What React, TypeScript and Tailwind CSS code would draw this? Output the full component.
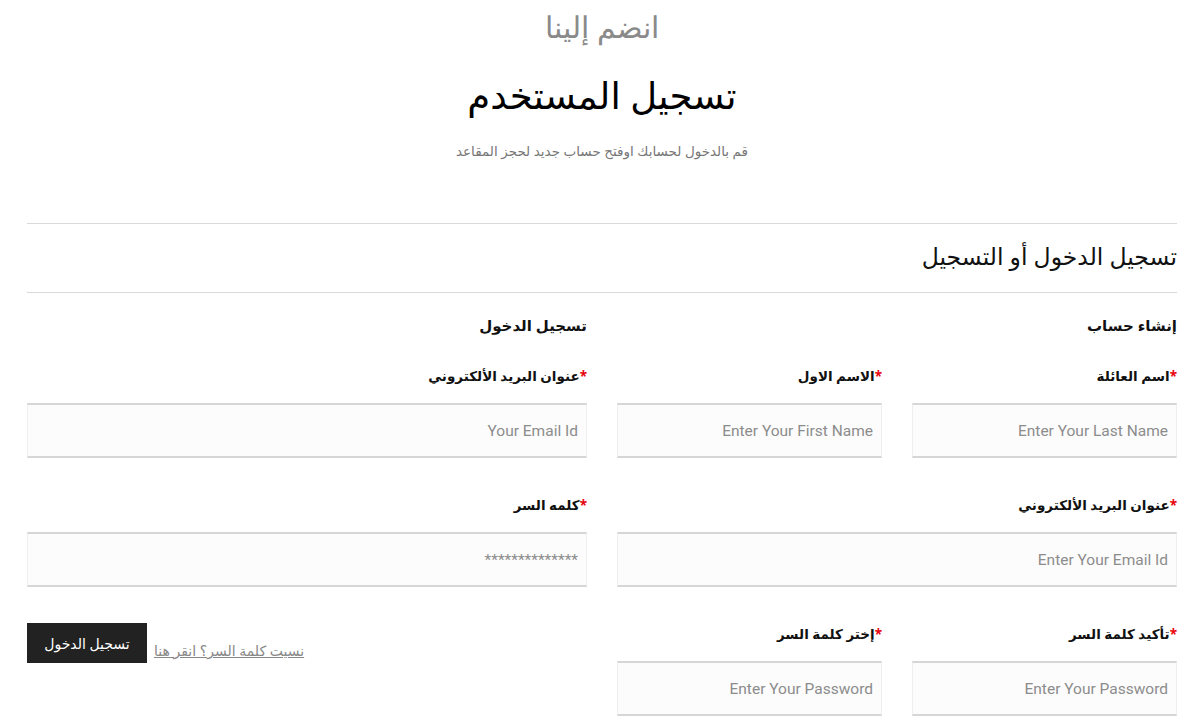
const font = { fontFamily: '"Noto Sans", "DejaVu Sans", sans-serif' };
const latin = { fontFamily: 'Roboto, "DejaVu Sans", sans-serif' };

type FieldProps = {
  label: string;
  placeholder: string;
  type?: string;
};

function Field({ label, placeholder, type = "text" }: FieldProps) {
  return (
    <div className="flex flex-col">
      <label className="h-[26px] text-[13.5px] font-bold leading-[26px] text-[#111]">
        <span className="text-red-600">*</span>
        {label}
      </label>
      <input
        type={type}
        placeholder={placeholder}
        style={latin}
        className="mt-[14px] h-[55px] w-full border-x border-x-[#eee] border-y-2 border-y-[#d6d6d6] bg-[#fcfcfc] px-2 text-[15.5px] text-[#333] outline-none placeholder:text-[#8c8c8c]"
      />
    </div>
  );
}

export default function App() {
  return (
    <div dir="rtl" style={font} className="min-h-[725px] bg-white pl-[27px] pr-[26px]">
      <div className="flex flex-col items-center text-center">
        <p className="mt-[5px] h-[44px] text-[30px] font-light leading-[44px] text-[#8a8a8a]">انضم إلينا</p>
        <h1 className="mt-[14px] h-[64px] text-[37px] font-medium leading-[64px] text-black">تسجيل المستخدم</h1>
        <p className="mt-[13px] h-[22px] text-[13.5px] leading-[22px] text-[#777]">قم بالدخول لحسابك اوفتح حساب جديد لحجز المقاعد</p>
      </div>

      <div className="mt-[61px] border-t border-[#d9d9d9]" />
      <h2 className="h-[68px] pb-[4px] text-[23.5px] font-medium leading-[64px] text-[#111]">تسجيل الدخول أو التسجيل</h2>
      <div className="border-t border-[#d9d9d9]" />

      <div className="mt-[19px] grid grid-cols-2 gap-[30px]">
        {/* register */}
        <section>
          <h3 className="h-[26px] text-[15px] font-semibold leading-[26px] text-[#111]">إنشاء حساب</h3>
          <div className="mt-[25px] grid grid-cols-2 gap-x-[30px]">
            <Field label="اسم العائلة" placeholder="Enter Your Last Name" />
            <Field label="الاسم الاول" placeholder="Enter Your First Name" />
          </div>
          <div className="mt-[34px]">
            <Field label="عنوان البريد الألكتروني" placeholder="Enter Your Email Id" type="email" />
          </div>
          <div className="mt-[34px] grid grid-cols-2 gap-x-[30px]">
            <Field label="تأكيد كلمة السر" placeholder="Enter Your Password" type="password" />
            <Field label="إختر كلمة السر" placeholder="Enter Your Password" type="password" />
          </div>
        </section>

        {/* login */}
        <section>
          <h3 className="h-[26px] text-[15px] font-semibold leading-[26px] text-[#111]">تسجيل الدخول</h3>
          <div className="mt-[25px]">
            <Field label="عنوان البريد الألكتروني" placeholder="Your Email Id" type="email" />
          </div>
          <div className="mt-[34px]">
            <Field label="كلمه السر" placeholder="**************" type="password" />
          </div>
          <div className="mt-[36px] flex items-end justify-end gap-[7px]" dir="ltr">
            <button type="button" className="h-[40px] w-[120px] bg-[#222] text-[14px] text-white">
              تسجيل الدخول
            </button>
            <a href="#" className="mb-[2px] text-[14px] text-[#888] underline">
              نسيت كلمة السر؟ انقر هنا
            </a>
            <div className="flex-1" />
          </div>
        </section>
      </div>
    </div>
  );
}
